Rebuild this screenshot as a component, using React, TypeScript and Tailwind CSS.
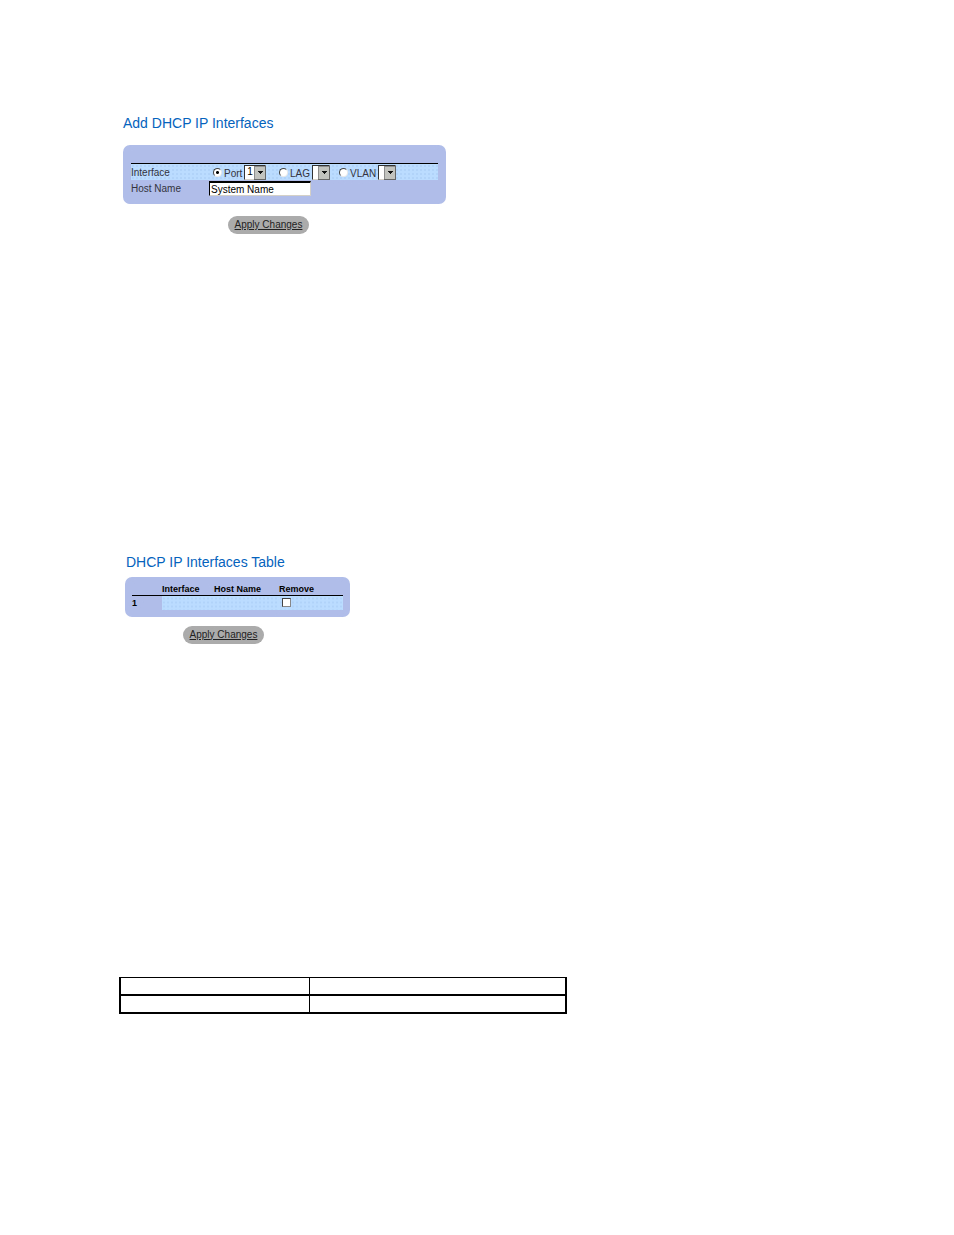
import type { ReactNode } from "react";

const ROW = "bg-[#bbdcff] bg-[radial-gradient(#b1d3f9_1px,transparent_1px)] bg-[size:4px_4px]";

function Title({ children }: { children: ReactNode }) {
  return <h2 className="text-[14px] leading-4 text-[#0563bd]">{children}</h2>;
}

function ApplyButton() {
  return (
    <button
      type="button"
      className="block h-[18px] w-[81px] rounded-full bg-[#ababab] text-center text-[10px] leading-4 whitespace-nowrap text-[#222222] underline"
    >
      Apply Changes
    </button>
  );
}

function PortSelect({ label, options, width }: { label: string; options: string[]; width: string }) {
  return (
    <span className={`relative block h-[15px] ${width}`}>
      <select
        aria-label={label}
        className="block h-full w-full appearance-none rounded-none border border-t-[#333333] border-r-[#d4d0c8] border-b-[#d4d0c8] border-l-[#333333] bg-white pl-0.5 text-[10px] leading-3 text-black"
      >
        {options.map((o) => (
          <option key={o}>{o}</option>
        ))}
      </select>
      <svg className="pointer-events-none absolute top-px right-0" width="12" height="14" viewBox="0 0 12 14">
        <rect width="12" height="14" fill="#666666" />
        <rect width="11" height="13" fill="#8c8c8c" />
        <rect x="1" y="1" width="10" height="12" fill="#c2c2be" />
        <path d="M4 5h5v1H8v1H7v1H6V7H5V6H4z" fill="#111111" />
      </svg>
    </span>
  );
}

function InterfaceChoice({
  label,
  options,
  width,
  checked,
}: {
  label: string;
  options: string[];
  width: string;
  checked?: boolean;
}) {
  return (
    <span className="flex items-center gap-[2px]">
      <label className="flex items-center gap-[2px]">
        <input
          type="radio"
          name="interface"
          defaultChecked={checked}
          className="size-[9px] appearance-none rounded-full border border-t-[#444444] border-r-[#e8e8e8] border-b-[#e8e8e8] border-l-[#444444] bg-white checked:bg-[radial-gradient(#000000_1px,#ffffff_2px)]"
        />
        <span className="pt-[3px] leading-3">{label}</span>
      </label>
      <PortSelect label={`${label} number`} options={options} width={width} />
    </span>
  );
}

function AddInterfaces() {
  return (
    <section>
      <div className="pl-1">
        <Title>Add DHCP IP Interfaces</Title>
      </div>
      <div className="mt-[14px] ml-1 w-[323px] max-w-full rounded-[7px] bg-[#b0bde8] px-2 pt-[18px] pb-[7px] text-[10px] text-[#333340]">
        <div className={`flex h-[17px] items-center border-t border-black ${ROW}`}>
          <span className="w-[82px] pt-px leading-3">Interface</span>
          <div className="flex">
            <div className="w-[66px]">
              <InterfaceChoice label="Port" options={["1"]} width="w-[22px]" checked />
            </div>
            <div className="w-[60px]">
              <InterfaceChoice label="LAG" options={[""]} width="w-[18px]" />
            </div>
            <InterfaceChoice label="VLAN" options={[""]} width="w-[18px]" />
          </div>
        </div>
        <div className="flex h-[17px] items-center">
          <label htmlFor="host" className="w-[78px] pt-px leading-3">
            Host Name
          </label>
          <input
            id="host"
            type="text"
            defaultValue="System Name"
            className="h-[15px] w-[102px] border border-t-2 border-t-black border-r-[#d4d0c8] border-b-[#d4d0c8] border-l-black bg-white px-px text-[10px] leading-3 text-black"
          />
        </div>
      </div>
      <div className="mt-3 ml-[109px]">
        <ApplyButton />
      </div>
    </section>
  );
}

function InterfacesTable() {
  return (
    <section>
      <div className="pl-[7px]">
        <Title>DHCP IP Interfaces Table</Title>
      </div>
      <div className="mt-[7px] ml-[6px] w-[225px] max-w-full rounded-[7px] bg-[#b0bde8] px-[7px] pt-[6px] pb-[7px]">
        <table className="w-full table-fixed border-collapse text-left text-[9px] leading-3 text-black">
          <thead>
            <tr className="h-3 border-b border-black">
              <td className="w-[30px] p-0" />
              <th className="w-[52px] p-0">Interface</th>
              <th className="w-[65px] p-0">Host Name</th>
              <th className="p-0">Remove</th>
            </tr>
          </thead>
          <tbody>
            <tr className="h-[14px]">
              <th className="p-0">1</th>
              <td className={`p-0 ${ROW}`} />
              <td className={`p-0 ${ROW}`} />
              <td className={`p-0 pl-[3px] ${ROW}`}>
                <input
                  type="checkbox"
                  aria-label="Remove interface 1"
                  className="block size-[9px] appearance-none border border-t-[#444444] border-r-[#888888] border-b-[#888888] border-l-[#444444] bg-white checked:bg-black"
                />
              </td>
            </tr>
          </tbody>
        </table>
      </div>
      <div className="mt-[9px] ml-16">
        <ApplyButton />
      </div>
    </section>
  );
}

export default function App() {
  return (
    <main className="min-h-screen bg-white pt-[115px] pb-16 pl-[119px] font-['Liberation_Sans',Arial,sans-serif]">
      <AddInterfaces />
      <div className="mt-80">
        <InterfacesTable />
      </div>
      <table className="mt-[333px] w-[448px] max-w-full table-fixed border-separate border-spacing-0 border-x-2 border-t border-black">
        <tbody>
          <tr className="h-[18px]">
            <td className="w-[189px] border-r border-b-2 border-black p-0" />
            <td className="border-b-2 border-black p-0" />
          </tr>
          <tr className="h-[18px]">
            <td className="border-r border-b-2 border-black p-0" />
            <td className="border-b-2 border-black p-0" />
          </tr>
        </tbody>
      </table>
    </main>
  );
}
